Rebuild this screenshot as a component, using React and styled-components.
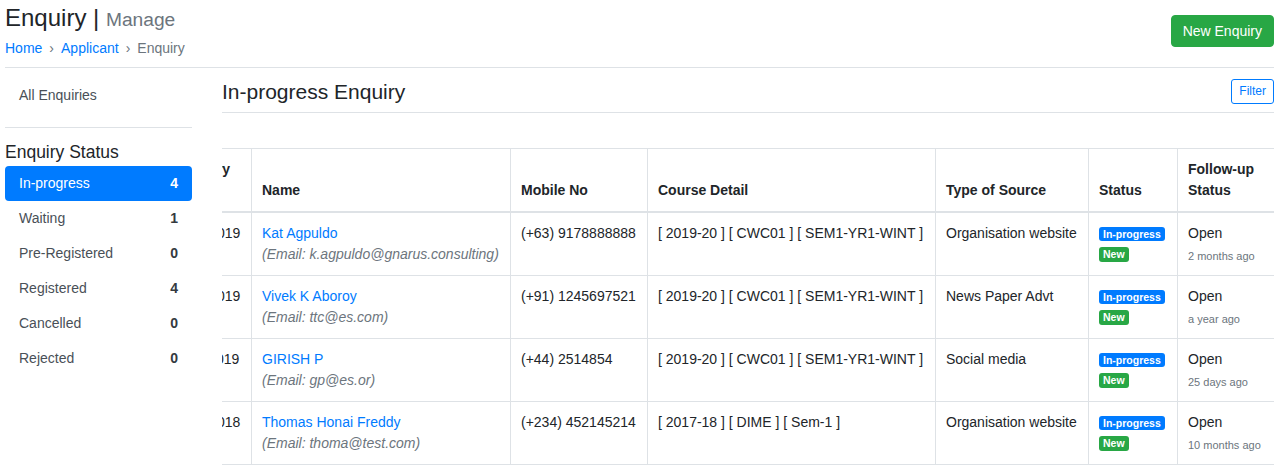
import React, { useLayoutEffect, useRef } from "react";
import styled, { createGlobalStyle } from "styled-components";

const GlobalStyle = createGlobalStyle`
  *, *::before, *::after { box-sizing: border-box; }
  body {
    margin: 0;
    background: #fff;
    color: #212529;
    font-family: "Liberation Sans", Arial, sans-serif;
    font-size: 14px;
    line-height: 1.5;
  }
`;

const enquiries = [
  { date: "9/10/2019", name: "Kat Agpuldo", email: "k.agpuldo@gnarus.consulting", mobile: "(+63) 9178888888", course: "[ 2019-20 ] [ CWC01 ] [ SEM1-YR1-WINT ]", source: "Organisation website", ago: "2 months ago" },
  { date: "2/10/2019", name: "Vivek K Aboroy", email: "ttc@es.com", mobile: "(+91) 1245697521", course: "[ 2019-20 ] [ CWC01 ] [ SEM1-YR1-WINT ]", source: "News Paper Advt", ago: "a year ago" },
  { date: "4/11/2019", name: "GIRISH P", email: "gp@es.or", mobile: "(+44) 2514854", course: "[ 2019-20 ] [ CWC01 ] [ SEM1-YR1-WINT ]", source: "Social media", ago: "25 days ago" },
  { date: "3/01/2018", name: "Thomas Honai Freddy", email: "thoma@test.com", mobile: "(+234) 452145214", course: "[ 2017-18 ] [ DIME ] [ Sem-1 ]", source: "Organisation website", ago: "10 months ago" },
];

const statuses = [
  { label: "In-progress", count: 4, active: true },
  { label: "Waiting", count: 1 },
  { label: "Pre-Registered", count: 0 },
  { label: "Registered", count: 4 },
  { label: "Cancelled", count: 0 },
  { label: "Rejected", count: 0 },
];

const App = () => {
  const scrollRef = useRef(null);

  // table is scrolled all the way right, like the original page
  useLayoutEffect(() => {
    const el = scrollRef.current;
    if (el) el.scrollLeft = el.scrollWidth;
  }, []);

  return (
    <Page>
      <GlobalStyle />
      <Header>
        <div>
          <Title>
            Enquiry | <small>Manage</small>
          </Title>
          <Breadcrumb>
            <li><a href="#">Home</a></li>
            <li><a href="#">Applicant</a></li>
            <li>Enquiry</li>
          </Breadcrumb>
        </div>
        <SuccessButton>New Enquiry</SuccessButton>
      </Header>

      <Body>
        <Sidebar>
          <NavItem>All Enquiries</NavItem>
          <Divider />
          <SideHeading>Enquiry Status</SideHeading>
          {statuses.map((s) => (
            <NavItem key={s.label} $active={s.active}>
              <span>{s.label}</span>
              <Count $active={s.active}>{s.count}</Count>
            </NavItem>
          ))}
        </Sidebar>

        <Main>
          <MainHeader>
            <MainTitle>In-progress Enquiry</MainTitle>
            <OutlineButton>Filter</OutlineButton>
          </MainHeader>

          <TableScroll ref={scrollRef}>
            <Table>
              <colgroup>
                <col style={{ width: 84 }} />
                <col style={{ width: 259 }} />
                <col style={{ width: 137 }} />
                <col style={{ width: 288 }} />
                <col style={{ width: 153 }} />
                <col style={{ width: 89 }} />
                <col style={{ width: 97 }} />
              </colgroup>
              <thead>
                <tr>
                  <th>Enquiry Date</th>
                  <th>Name</th>
                  <th>Mobile No</th>
                  <th>Course Detail</th>
                  <th>Type of Source</th>
                  <th>Status</th>
                  <th>Follow-up Status</th>
                </tr>
              </thead>
              <tbody>
                {enquiries.map((e) => (
                  <tr key={e.name}>
                    <td>{e.date}</td>
                    <td>
                      <NameLink href="#">{e.name}</NameLink>
                      <Email>(Email: {e.email})</Email>
                    </td>
                    <td>{e.mobile}</td>
                    <td>{e.course}</td>
                    <td>{e.source}</td>
                    <td>
                      <BadgeStack>
                        <Badge $color="#007bff">In-progress</Badge>
                        <Badge $color="#28a745">New</Badge>
                      </BadgeStack>
                    </td>
                    <td>
                      <div>Open</div>
                      <Ago>{e.ago}</Ago>
                    </td>
                  </tr>
                ))}
              </tbody>
            </Table>
          </TableScroll>
        </Main>
      </Body>
    </Page>
  );
};

const Page = styled.div`
  padding: 0 8px 0 5px;
`;

const Header = styled.header`
  display: flex;
  align-items: center;
  justify-content: space-between;
  padding: 4px 0 8px;
  border-bottom: 1px solid #dee2e6;
`;

const Title = styled.h1`
  margin: 0 0 5px;
  font-size: 24px;
  font-weight: 400;
  line-height: 1.2;
  color: #212529;
  small {
    font-size: 80%;
    color: #6c757d;
  }
`;

const Breadcrumb = styled.ol`
  display: flex;
  list-style: none;
  margin: 0;
  padding: 0;
  color: #6c757d;
  li + li::before {
    content: "›";
    padding: 0 7px;
    color: #6c757d;
  }
  a {
    color: #007bff;
    text-decoration: none;
  }
`;

const SuccessButton = styled.button`
  height: 32px;
  padding: 0 11px;
  border: 1px solid #28a745;
  border-radius: 4px;
  background: #28a745;
  color: #fff;
  font-family: inherit;
  font-size: 14px;
`;

const Body = styled.div`
  display: flex;
  gap: 30px;
`;

const Sidebar = styled.aside`
  flex: 0 0 187px;
  padding-top: 10px;
`;

const Count = styled.span`
  font-weight: 700;
  color: ${(p) => (p.$active ? "#fff" : "#343a40")};
`;

const NavItem = styled.div`
  display: flex;
  justify-content: space-between;
  height: 35px;
  padding: 7px 14px;
  border-radius: 4px;
  background: ${(p) => (p.$active ? "#007bff" : "transparent")};
  color: ${(p) => (p.$active ? "#fff" : "#495057")};
`;

const Divider = styled.hr`
  margin: 14px 0 0;
  border: 0;
  border-top: 1px solid #dee2e6;
`;

const SideHeading = styled.h5`
  margin: 14px 0 3px;
  font-size: 17.5px;
  font-weight: 400;
  line-height: 1.2;
  color: #212529;
`;

const Main = styled.main`
  flex: 1;
  min-width: 0;
`;

const MainHeader = styled.div`
  display: flex;
  align-items: center;
  justify-content: space-between;
  padding: 11px 0 8px;
  border-bottom: 1px solid #dee2e6;
  margin-bottom: 35px;
`;

const MainTitle = styled.h4`
  margin: 0;
  font-size: 21px;
  font-weight: 400;
  line-height: 1.2;
  color: #212529;
`;

const OutlineButton = styled.button`
  height: 25px;
  padding: 0 7px;
  border: 1px solid #007bff;
  border-radius: 3px;
  background: #fff;
  color: #007bff;
  font-family: inherit;
  font-size: 12px;
`;

const TableScroll = styled.div`
  overflow-x: auto;
  scrollbar-width: none;
  &::-webkit-scrollbar { display: none; }
`;

const Table = styled.table`
  width: 1107px;
  table-layout: fixed;
  border-collapse: separate;
  border-spacing: 0;
  color: #212529;

  th, td {
    padding: 10px;
    border-left: 1px solid #dee2e6;
    text-align: left;
    white-space: nowrap;
  }
  th {
    vertical-align: bottom;
    font-weight: 700;
    white-space: normal;
    border-top: 1px solid #dee2e6;
    border-bottom: 2px solid #dee2e6;
  }
  td {
    vertical-align: top;
    border-bottom: 1px solid #dee2e6;
  }
`;

const NameLink = styled.a`
  display: block;
  color: #007bff;
  text-decoration: none;
`;

const Email = styled.div`
  font-style: italic;
  color: #6c757d;
`;

const BadgeStack = styled.div`
  display: flex;
  flex-direction: column;
  align-items: flex-start;
  gap: 6px;
  padding-top: 4px;
`;

const Badge = styled.span`
  display: inline-block;
  padding: 2px 4px;
  border-radius: 3px;
  background: ${(p) => p.$color};
  color: #fff;
  font-size: 10.5px;
  font-weight: 700;
  line-height: 1;
`;

const Ago = styled.div`
  margin-top: 4px;
  font-size: 11px;
  color: #6c757d;
`;

export default App;
